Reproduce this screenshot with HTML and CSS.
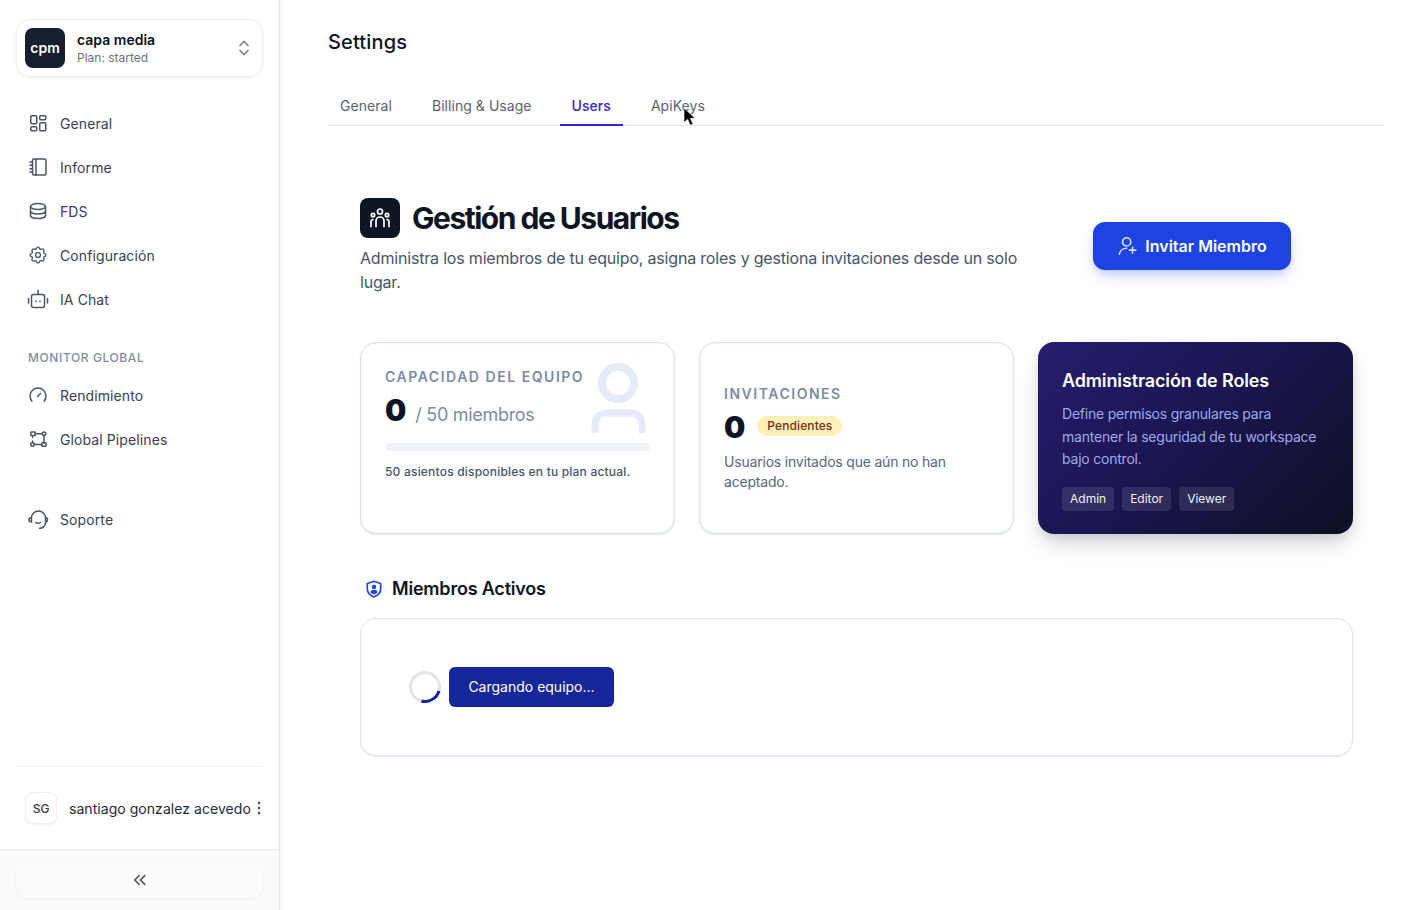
FILE: index.html
```html
<!DOCTYPE html>
<html lang="es">
<head>
<meta charset="utf-8">
<title>Settings</title>
<link rel="stylesheet" href="styles.css">
</head>
<body>
<div class="app">
  <aside class="sidebar">
    <div class="side-top">
      <div class="org">
        <div class="org-logo">cpm</div>
        <div class="org-text">
          <div class="org-name">capa media</div>
          <div class="org-plan">Plan: started</div>
        </div>
        <svg class="org-chev" viewBox="0 0 12 16"><path d="M1.500 6 6 1.500 10.500 6M1.500 10 6 14.500 10.500 10"/></svg>
      </div>
      <nav class="nav">
        <a class="nav-item"><svg class="ico" viewBox="0 0 24 24"><rect x="4.750" y="4.750" width="6" height="8" rx="1"/><rect x="4.750" y="15.750" width="6" height="4" rx="1"/><rect x="13.750" y="4.750" width="6" height="4" rx="1"/><rect x="13.750" y="11.750" width="6" height="8" rx="1"/></svg>General</a>
        <a class="nav-item"><svg class="ico" viewBox="0 0 24 24"><rect x="6.500" y="4" width="13.500" height="16" rx="1.500"/><path d="M10 4v16M4 7h2.500M4 10.300h2.500M4 13.700h2.500M4 17h2.500"/></svg>Informe</a>
        <a class="nav-item"><svg class="ico" viewBox="0 0 24 24"><ellipse cx="12" cy="7.500" rx="7.500" ry="3"/><path d="M4.500 7.500v9c0 1.700 3.400 3 7.500 3s7.500-1.300 7.500-3v-9M4.500 12c0 1.700 3.400 3 7.500 3s7.500-1.300 7.500-3"/></svg>FDS</a>
        <a class="nav-item"><svg class="ico" viewBox="0 0 24 24"><g transform="translate(12 12) scale(.88) translate(-12 -12)"><path d="M10.325 4.317c.426-1.756 2.924-1.756 3.350 0a1.724 1.724 0 0 0 2.573 1.066c1.543-.94 3.310.826 2.370 2.370a1.724 1.724 0 0 0 1.065 2.572c1.756.426 1.756 2.924 0 3.350a1.724 1.724 0 0 0-1.066 2.573c.94 1.543-.826 3.310-2.370 2.370a1.724 1.724 0 0 0-2.572 1.065c-.426 1.756-2.924 1.756-3.350 0a1.724 1.724 0 0 0-2.573-1.066c-1.543.94-3.310-.826-2.370-2.370a1.724 1.724 0 0 0-1.065-2.572c-1.756-.426-1.756-2.924 0-3.350a1.724 1.724 0 0 0 1.066-2.573c-.94-1.543.826-3.310 2.370-2.370 1 .608 2.296.07 2.572-1.065z"/><circle cx="12" cy="12" r="2.800"/></g></svg>Configuración</a>
        <a class="nav-item"><svg class="ico" viewBox="0 0 24 24"><rect x="5.500" y="7.500" width="13" height="13" rx="2"/><path d="M12 7.500V3.500M2.500 11.500v4.500M21.500 11.500v4.500M10 14v.4M14 14v.4"/></svg>IA Chat</a>
      </nav>
      <div class="nav-label">MONITOR GLOBAL</div>
      <nav class="nav">
        <a class="nav-item"><svg class="ico" viewBox="0 0 24 24"><path d="M5.900 18.200A8 8 0 1 1 18.100 18.200M11.500 13.500l3-3"/></svg>Rendimiento</a>
        <a class="nav-item"><svg class="ico" viewBox="0 0 24 24"><rect x="4.750" y="5" width="4.500" height="3.500" rx=".8"/><circle cx="18" cy="6.750" r="1.750"/><circle cx="6.500" cy="17.500" r="1.750"/><rect x="15.750" y="15.750" width="4.250" height="3.500" rx=".8"/><path d="M9.250 6.750h7M8.250 17.500h7.500M18 8.500v7.250M6.500 9.500v1M6.500 14v1.500"/></svg>Global Pipelines</a>
      </nav>
      <nav class="nav nav-support">
        <a class="nav-item"><svg class="ico" viewBox="0 0 24 24"><path d="M5.500 14.500V11a7 7 0 0 1 14 0v5a5.500 5.500 0 0 1-6 5.200M5.500 10.500c-1.500.2-2.500 1-2.500 2.300s1 2.200 2.500 2.300M19.500 10.500c1.400.2 2 1 2 2.300s-.6 2.200-2 2.300M9.500 15.500c1.500 1 3.500 1 5 0"/></svg>Soporte</a>
      </nav>
    </div>
    <div class="side-user">
      <div class="user-row">
        <div class="avatar">SG</div>
        <div class="user-name">santiago gonzalez acevedo</div>
        <svg class="dots" viewBox="0 0 4 14"><circle cx="2" cy="2" r="1.300"/><circle cx="2" cy="7" r="1.300"/><circle cx="2" cy="12" r="1.300"/></svg>
      </div>
    </div>
    <div class="side-foot">
      <div class="collapse"><svg class="collapse-ico" viewBox="0 0 24 24"><path d="M11.500 5.500 5 12l6.500 6.500M19 5.500 12.500 12l6.500 6.500"/></svg></div>
    </div>
  </aside>
  <main class="main">
    <h1 class="page-title">Settings</h1>
    <div class="tabs">
      <a class="tab">General</a>
      <a class="tab">Billing &amp; Usage</a>
      <a class="tab tab-active">Users</a>
      <a class="tab">ApiKeys</a>
    </div>
    <section class="content">
      <header class="hero">
        <div class="hero-left">
          <div class="hero-title-row">
            <div class="hero-icon"><svg viewBox="0 0 24 24"><circle cx="12" cy="5.500" r="2.500"/><circle cx="5" cy="9" r="1.700"/><circle cx="19" cy="9" r="1.700"/><path d="M8 20.500v-5.500a4 4 0 0 1 8 0v5.500M3 20.500V16a2.500 2.500 0 0 1 2-2.500M21 20.500V16a2.500 2.500 0 0 0-2-2.500"/></svg></div>
            <h2 class="hero-title">Gestión de Usuarios</h2>
          </div>
          <p class="hero-desc">Administra los miembros de tu equipo, asigna roles y gestiona invitaciones desde un solo lugar.</p>
        </div>
        <button class="invite"><svg viewBox="0 0 24 24"><circle cx="10.500" cy="7.500" r="4.500"/><path d="M2.500 21a8 8 0 0 1 8-6.500M17 13v7M13.500 16.500h7"/></svg>Invitar Miembro</button>
      </header>
      <div class="cards">
        <div class="card card-cap">
          <svg class="ghost" viewBox="0 0 55 71"><circle cx="27" cy="21" r="16"/><path d="M4 71V62a11 11 0 0 1 11-11h25a11 11 0 0 1 11 11v9"/></svg>
          <div class="card-label">CAPACIDAD DEL EQUIPO</div>
          <div class="stat-row"><span class="stat">0</span><span class="stat-sub">/ 50 miembros</span></div>
          <div class="bar"></div>
          <div class="bar-note">50 asientos disponibles en tu plan actual.</div>
        </div>
        <div class="card card-inv">
          <div class="card-label">INVITACIONES</div>
          <div class="stat-row"><span class="stat">0</span><span class="pill">Pendientes</span></div>
          <p class="inv-note">Usuarios invitados que aún no han aceptado.</p>
        </div>
        <div class="card-dark">
          <h3 class="dark-title">Administración de Roles</h3>
          <p class="dark-text">Define permisos granulares para mantener la seguridad de tu workspace bajo control.</p>
          <div class="chips"><span class="chip">Admin</span><span class="chip">Editor</span><span class="chip">Viewer</span></div>
        </div>
      </div>
      <div class="members-head">
        <svg viewBox="0 0 24 24"><path class="shield" d="M12 2.800 20 5.500v6.500c0 4.500-3.400 7.700-8 9.500-4.600-1.800-8-5-8-9.500V5.500z"/><circle class="shield-fill" cx="12" cy="9.500" r="2.600"/><path class="shield-fill" d="M7.500 16c.6-2 2.400-3 4.500-3s3.900 1 4.500 3c-1.200 1.100-2.800 1.900-4.500 2.500-1.700-.6-3.300-1.400-4.500-2.500z"/></svg>
        <h3 class="members-title">Miembros Activos</h3>
      </div>
      <div class="members-card">
        <div class="spinner"></div>
        <div class="loading">Cargando equipo...</div>
      </div>
    </section>
  </main>
</div>
<svg class="cursor" viewBox="0 0 14 22"><path d="M1 1v16l4-3.500 3 6.500 2.800-1.300-3-6.200H13z"/></svg>
</body>
</html>
```

FILE: styles.css
```css
* { box-sizing: border-box; }
html, body { margin: 0; padding: 0; height: 100%; }
body { font-family: Inter, "Liberation Sans", sans-serif; background: #fff; color: #0f172a; overflow: hidden; }
.app { display: flex; height: 910px; }

.sidebar { width: 280px; flex: none; display: flex; flex-direction: column; border-right: 1px solid #e8e9ec; box-shadow: 1px 0 3px rgba(15,23,42,.04); background: #fff; }
.side-top { flex: 1; padding: 19px 16px 0; }
.org { height: 58px; display: flex; align-items: center; padding: 0 8px; border: 1px solid #eceef1; border-radius: 14px; box-shadow: 0 1px 3px rgba(15,23,42,.07); }
.org-logo { width: 40px; height: 40px; padding-bottom: 1px; border-radius: 8px; background: #161f30; color: #fff; font-size: 14px; font-weight: 600; display: flex; align-items: center; justify-content: center; flex: none; }
.org-text { margin-left: 12px; flex: 1; }
.org-name { font-size: 14px; font-weight: 600; line-height: 20px; color: #0b0f19; }
.org-plan { font-size: 12px; line-height: 16px; color: #6b7280; }
.org-chev { width: 12px; height: 16px; fill: none; stroke: #7b8494; stroke-width: 1.600; margin-right: 4px; }
.nav { margin-top: 24px; display: flex; flex-direction: column; }
.nav-item { height: 44px; display: flex; align-items: center; gap: 10px; padding-left: 10px; font-size: 14px; letter-spacing: .1px; color: #374151; }
.ico { width: 24px; height: 24px; flex: none; fill: none; stroke: #4b5563; stroke-width: 1.500; stroke-linecap: round; stroke-linejoin: round; }
.nav-label { margin: 28px 0 0 12px; height: 18px; line-height: 18px; font-size: 12px; font-weight: 500; letter-spacing: .6px; color: #858c99; }
.nav-label + .nav { margin-top: 6px; }
.nav-support { margin-top: 36px; }
.side-user { height: 83px; margin: 0 16px; border-top: 1px solid #eef0f2; display: flex; align-items: center; padding-left: 9px; }
.user-row { display: flex; align-items: center; flex: 1; }
.avatar { width: 32px; height: 32px; border: 1px solid #eceef1; border-radius: 8px; box-shadow: 0 1px 2px rgba(15,23,42,.06); font-size: 12px; font-weight: 500; color: #374151; display: flex; align-items: center; justify-content: center; flex: none; }
.user-name { margin-left: 12px; font-size: 14px; letter-spacing: .05px; color: #1f2937; white-space: nowrap; flex: 1; }
.dots { width: 4px; height: 14px; fill: #4b5563; margin-right: 2px; }
.side-foot { height: 61px; border-top: 1px solid #e8e9ec; background: #fafafa; padding: 12px 16px; }
.collapse { height: 36px; border-radius: 12px; background: #fbfbfb; box-shadow: 0 1px 3px rgba(15,23,42,.05); display: flex; align-items: center; justify-content: center; }
.collapse-ico { width: 18px; height: 18px; fill: none; stroke: #4b5563; stroke-width: 2; }

.main { flex: 1; min-width: 0; padding: 0 40px 0 48px; }
.page-title { margin: 0; padding-top: 28px; font-size: 20px; line-height: 28px; font-weight: 500; letter-spacing: .15px; color: #0d1424; }
.tabs { margin-top: 22px; height: 48px; border-bottom: 1px solid #e2e4e9; display: flex; gap: 16px; }
.tab { height: 48px; padding: 18px 12px 0; font-size: 14px; font-weight: 400; line-height: 20px; letter-spacing: .05px; color: #5b6270; }
.tab-active { color: #3b23e0; font-weight: 500; border-bottom: 2px solid #3b23e0; }

.content { padding: 72px 32px 0; }
.hero { display: flex; justify-content: space-between; align-items: center; padding-right: 62px; }
.hero-left { width: 664px; }
.hero-title-row { display: flex; align-items: center; gap: 12px; height: 40px; }
.hero-icon { width: 40px; height: 40px; border-radius: 8px; background: #0d1424; display: flex; align-items: center; justify-content: center; }
.hero-icon svg { width: 24px; height: 24px; fill: none; stroke: #fff; stroke-width: 1.700; stroke-linecap: round; }
.hero-title { margin: 0; font-size: 30px; font-weight: 700; letter-spacing: -1.500px; color: #0d1424; line-height: 40px; }
.hero-desc { margin: 8px 0 0; font-size: 16px; line-height: 24px; letter-spacing: -.19px; color: #475569; }
.invite { width: 198px; height: 48px; border: 0; border-radius: 12px; background: #1d44e3; color: #fff; font-family: inherit; font-size: 16px; font-weight: 600; display: flex; align-items: center; justify-content: center; gap: 6px; box-shadow: 0 8px 16px -4px rgba(29,68,227,.25), 0 3px 6px rgba(29,68,227,.12); }
.invite svg { width: 22px; height: 22px; fill: none; stroke: #dbe4ff; stroke-width: 1.700; stroke-linecap: round; }

.cards { margin-top: 48px; display: flex; gap: 24px; }
.card, .card-dark { width: 315px; height: 192px; border-radius: 16px; }
.card { background: #fff; border: 1px solid #dfe5ef; box-shadow: 0 1px 1px rgba(203,213,225,.6), inset 0 0 0 .5px #e6ebf3; padding: 24px; position: relative; overflow: hidden; }
.ghost { position: absolute; right: 28px; top: 19px; width: 55px; height: 71px; fill: none; stroke: #e6ebfa; }
.ghost circle { stroke-width: 8; }
.ghost path { stroke-width: 7; }
.card-label { font-size: 14px; line-height: 20px; font-weight: 600; letter-spacing: 1.530px; color: #7d8ca6; position: relative; }
.stat-row { display: flex; align-items: center; height: 32px; margin-top: 7px; position: relative; }
.stat { font-size: 30px; font-weight: 900; line-height: 32px; color: #0d1424; }
.stat-sub { margin-left: 9px; padding-top: 8px; font-size: 18px; letter-spacing: -.3px; color: #7d8ca6; }
.bar { height: 8px; margin-top: 17px; border-radius: 4px; background: #eff2f7; }
.bar-note { margin-top: 13px; font-size: 12px; line-height: 16px; font-weight: 500; letter-spacing: .2px; color: #475569; }
.card-inv { padding-top: 41px; }
.pill { margin: 0 0 2px 12px; height: 20px; padding: 0 10px; border-radius: 10px; background: #fdf0b8; color: #7c2d12; font-size: 12px; font-weight: 500; line-height: 20px; letter-spacing: .1px; }
.inv-note { margin: 9px 0 0; font-size: 14px; line-height: 20px; letter-spacing: -.2px; color: #5a677d; }
.card-dark { background: linear-gradient(135deg, #271c6f 0%, #1a1650 48%, #0d0f22 100%); padding: 24px; color: #fff; box-shadow: 0 12px 24px -6px rgba(15,23,42,.22), 0 4px 8px rgba(15,23,42,.08); }
.dark-title { margin: 3px 0 0; font-size: 18px; line-height: 24px; font-weight: 600; letter-spacing: -.13px; }
.dark-text { margin: 10px 0 0; font-size: 14px; line-height: 22.500px; letter-spacing: -.22px; color: #a0a8e8; }
.chips { margin-top: 16px; display: flex; gap: 8px; }
.chip { height: 24px; padding: 0 8px; border-radius: 4px; background: rgba(255,255,255,.1); font-size: 12px; line-height: 24px; color: #eef0fb; }

.members-head { margin-top: 42px; height: 26px; display: flex; align-items: center; gap: 8px; padding-left: 4px; }
.members-head svg { width: 20px; height: 22px; }
.shield { fill: none; stroke: #1d44e3; stroke-width: 2; stroke-linejoin: round; }
.shield-fill { fill: #1d44e3; }
.members-title { margin: 0; font-size: 18px; font-weight: 600; line-height: 26px; letter-spacing: -.2px; color: #0d1424; }
.members-card { margin-top: 16px; height: 138px; border: 1px solid #dfe5ef; border-radius: 16px; box-shadow: 0 1px 1px rgba(203,213,225,.5); display: flex; align-items: center; padding-left: 48px; gap: 8px; }
.spinner { width: 32px; height: 32px; border-radius: 50%; border: 3px solid #e2e4e9; border-bottom-color: #16279c; transform: rotate(-30deg); }
.loading { width: 165px; height: 40px; border-radius: 6px; background: #16279c; color: #fff; font-size: 14px; line-height: 40px; text-align: center; }
.cursor { position: absolute; left: 683px; top: 107px; width: 13px; height: 20px; fill: #000; stroke: #fff; stroke-width: .6; }
```
